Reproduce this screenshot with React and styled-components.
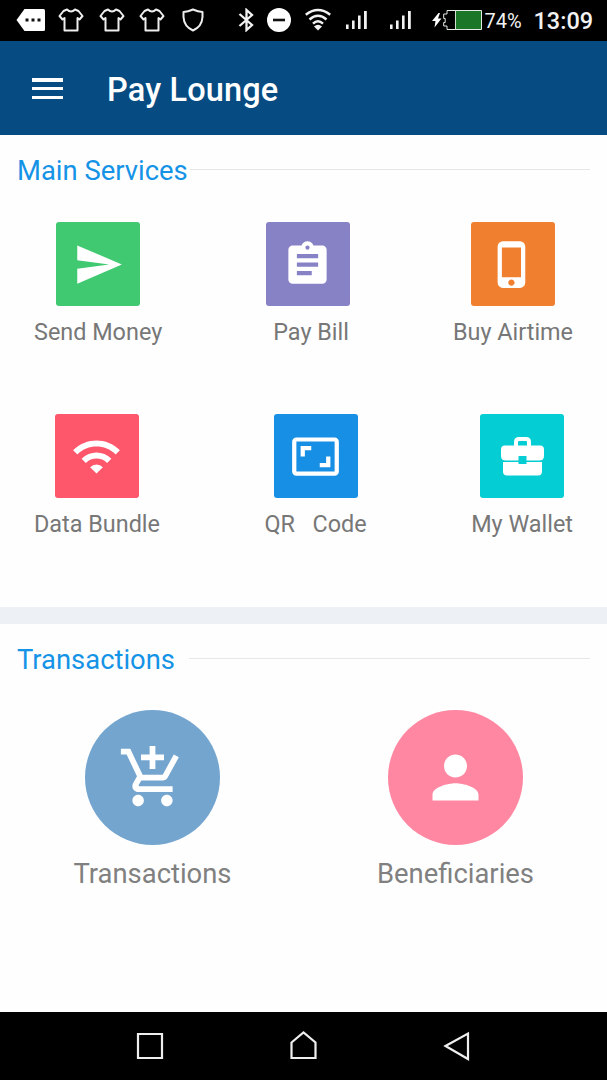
import React from 'react'
import styled, { createGlobalStyle } from 'styled-components'
import {
  MdAddShoppingCart,
  MdAspectRatio,
  MdAssignment,
  MdPerson,
  MdPhoneIphone,
  MdSend,
  MdWifi,
} from 'react-icons/md'

const GlobalStyle = createGlobalStyle`
  * {
    box-sizing: border-box;
  }
  body {
    margin: 0;
    background: #fff;
    font-family: Roboto, sans-serif;
  }
  svg {
    display: block;
    flex: none;
  }
`

const Screen = styled.div`
  display: flex;
  flex-direction: column;
  width: 607px;
  height: 1080px;
  overflow: hidden;
  background: #fefefe;
`

const StatusBar = styled.div`
  display: flex;
  align-items: center;
  height: 41px;
  padding: 0 14px 1px 16px;
  background: #000;
  color: #f2f2f2;
`

const StatusGroup = styled.div`
  display: flex;
  align-items: center;
  gap: ${props => props.gap || 0}px;
  margin-left: ${props => props.left || 0}px;
`

const BatteryText = styled.span`
  margin: 2px 0 0 3px;
  width: 49px;
  font-size: 20px;
  line-height: 24px;
`

const Clock = styled.span`
  margin-top: 2px;
  font-size: 23.5px;
  font-weight: 500;
  line-height: 28px;
  white-space: nowrap;
`

const Header = styled.header`
  display: flex;
  align-items: center;
  height: 94px;
  padding: 4px 32px 0;
  background: #074b83;
  color: #fff;
`

const Menu = styled.div`
  display: flex;
  flex-direction: column;
  justify-content: space-between;
  width: 31px;
  height: 21px;
  margin-top: -3px;
`

const MenuBar = styled.span`
  height: 3.5px;
  background: #fff;
`

const Title = styled.h1`
  margin: 0 0 0 44px;
  font-size: 32.5px;
  font-weight: 500;
  letter-spacing: 0.15px;
  line-height: 40px;
  white-space: nowrap;
`

const Section = styled.section`
  height: ${props => props.height}px;
  padding-top: 18px;
`

const SectionHead = styled.div`
  display: flex;
  align-items: center;
  height: 36px;
  padding: 0 17px;
`

const SectionTitle = styled.h2`
  margin: 0;
  width: ${props => props.width}px;
  color: #1593e6;
  font-size: 27.4px;
  font-weight: 400;
  line-height: 36px;
  white-space: nowrap;
`

const Rule = styled.span`
  flex: 1;
  height: 1px;
  margin-top: -3px;
  background: #e4e6e8;
`

const ServiceRow = styled.div`
  display: flex;
  justify-content: space-between;
  margin: ${props => props.top}px 34px 0;
`

const Service = styled.div`
  display: flex;
  flex-direction: column;
  align-items: center;
`

const Tile = styled.div`
  display: flex;
  align-items: center;
  justify-content: center;
  width: 84px;
  height: 84px;
  border-radius: 3px;
  background: ${props => props.color};
  color: #fff;
`

const Label = styled.span`
  margin-top: 11px;
  padding-left: ${props => props.indent || 0}px;
  color: #777;
  font-size: 23.4px;
  line-height: 30px;
  white-space: pre;
`

const Divider = styled.div`
  height: 17px;
  background: #edf1f5;
`

const CircleRow = styled.div`
  display: grid;
  grid-template-columns: 1fr 1fr;
  margin-top: 32px;
  padding-left: 1px;
`

const Circle = styled(Tile)`
  width: 135px;
  height: 135px;
  border-radius: 50%;
`

const CircleLabel = styled(Label)`
  margin-top: 12px;
  color: #808080;
  font-size: 27.4px;
  line-height: 34px;
`

const NavBar = styled.nav`
  display: flex;
  align-items: center;
  justify-content: space-between;
  height: 68px;
  margin-top: auto;
  padding: 0 136px 0 135px;
  background: #000;
`

const MessageIcon = () => (
  <svg width="30" height="24" viewBox="0 0 30 24">
    <path d="M8.500 1h19a1.500 1.500 0 0 1 1.500 1.500v19a1.500 1.500 0 0 1-1.500 1.500h-19L.5 12z" fill="#fff" />
    <path d="M9.500 10.500h3v3h-3zM15.500 10.500h3v3h-3zM21.500 10.500h3v3h-3z" fill="#111" />
  </svg>
)

const ShirtIcon = () => (
  <svg width="26" height="24" viewBox="0 0 26 24" fill="none" stroke="#eee" strokeWidth="2" strokeLinejoin="round">
    <path d="M9 1.500Q13 5.500 17 1.500L20.500 3L24.500 8L21.500 11.500L19.500 10V22.500H6.500V10L4.500 11.500L1.500 8L5.500 3Z" />
  </svg>
)

const ShieldIcon = () => (
  <svg width="22" height="24" viewBox="0 0 22 24" fill="none" stroke="#eee" strokeWidth="2" strokeLinejoin="round">
    <path d="M11 1.500Q6 3.800 1.500 4V9Q2 18.500 11 22.500Q20 18.500 20.500 9V4Q16 3.800 11 1.500Z" />
  </svg>
)

const BluetoothIcon = () => (
  <svg width="16" height="24" viewBox="0 0 16 24" fill="none" stroke="#f2f2f2" strokeWidth="2.300">
    <path d="M1.500 6L14 17L8.500 22V2L14 7L1.500 18" />
  </svg>
)

const DoNotDisturbIcon = () => (
  <svg width="24" height="24" viewBox="0 0 24 24">
    <circle cx="12" cy="12" r="12" fill="#fff" />
    <path d="M6 10.700h12v2.600H6z" fill="#111" />
  </svg>
)

const WifiStatusIcon = () => (
  <svg width="26" height="24" viewBox="0 0 26 24" fill="none" stroke="#f2f2f2" strokeWidth="2.500">
    <path d="M.8 6.800Q13-2.800 25.200 6.800M4.500 11.500Q13 4 21.500 11.500M8 15.600Q13 11 18 15.600" />
    <path d="M9 18.500Q13 15 17 18.500L13 22.500Z" fill="#f2f2f2" stroke="none" />
  </svg>
)

const SignalIcon = () => (
  <svg width="21" height="24" viewBox="0 0 21 24" fill="#f2f2f2">
    <path d="M0 16.500h2.600V21H0zM6 12.500h2.600V21H6zM12 7.500h2.600V21H12zM18 3h2.800v18H18z" />
  </svg>
)

const BatteryIcon = () => (
  <svg width="50" height="24" viewBox="0 0 50 24">
    <path d="M6.500 5L0 13h3.500L2.500 19.500L9.500 10.500H6L8 5z" fill="#fff" />
    <path d="M23.500 2.500H49.300V21.500H23.500z" fill="#1b7627" />
    <path d="M49.500 2.500H15V6H11.700v4.500h1.500v4h-1.500V18H15v3.500H49.500z" fill="none" stroke="#e4ebe4" strokeWidth="1" />
    <path d="M23.500 2.500v19" stroke="#cfe0cf" />
  </svg>
)

const BriefcaseIcon = () => (
  <svg width="44" height="40" viewBox="0 0 44 40">
    <path d="M16 10V6Q16 3 19 3H26Q29 3 29 6V10" fill="none" stroke="#fff" strokeWidth="4" />
    <path d="M5 9.500H40Q44 9.500 44 13.500V20Q44 24.500 39 24.500H26.500V20H18.500V24.500H6Q1 24.500 1 20V13.500Q1 9.500 5 9.500Z" fill="#fff" />
    <path d="M3 26H18.500V28H26.500V26H42V35.500Q42 39.500 38 39.500H7Q3 39.500 3 35.500Z" fill="#fff" />
  </svg>
)

const services = [
  [
    { label: 'Send Money', color: '#40c971', icon: <MdSend size={51} /> },
    { label: 'Pay Bill', color: '#8781c6', icon: <MdAssignment size={51} />, indent: 7 },
    { label: 'Buy Airtime', color: '#f08030', icon: <MdPhoneIphone size={51} /> },
  ],
  [
    { label: 'Data Bundle', color: '#fe566b', icon: <MdWifi size={51} /> },
    { label: 'QR   Code', color: '#178fe5', icon: <MdAspectRatio size={51} /> },
    { label: 'My Wallet', color: '#04cdd3', icon: <BriefcaseIcon /> },
  ],
]

const App = () => (
  <>
    <GlobalStyle />
    <Screen>
      <StatusBar>
        <MessageIcon />
        <StatusGroup gap={14.5} left={12}>
          <ShirtIcon />
          <ShirtIcon />
          <ShirtIcon />
        </StatusGroup>
        <StatusGroup left={16.5}>
          <ShieldIcon />
        </StatusGroup>
        <StatusGroup gap={13.5} left={34}>
          <BluetoothIcon />
          <DoNotDisturbIcon />
          <WifiStatusIcon />
        </StatusGroup>
        <StatusGroup gap={23} left={15}>
          <SignalIcon />
          <SignalIcon />
        </StatusGroup>
        <StatusGroup left={21}>
          <BatteryIcon />
          <BatteryText>74%</BatteryText>
          <Clock>13:09</Clock>
        </StatusGroup>
      </StatusBar>

      <Header>
        <Menu>
          <MenuBar />
          <MenuBar />
          <MenuBar />
        </Menu>
        <Title>Pay Lounge</Title>
      </Header>

      <Section height={472}>
        <SectionHead>
          <SectionTitle width={173}>Main Services</SectionTitle>
          <Rule />
        </SectionHead>
        {services.map((row, i) => (
          <ServiceRow key={i} top={i === 0 ? 33 : 67}>
            {row.map(({ label, color, icon, indent }) => (
              <Service key={label}>
                <Tile color={color}>{icon}</Tile>
                <Label indent={indent}>{label}</Label>
              </Service>
            ))}
          </ServiceRow>
        ))}
      </Section>

      <Divider />

      <Section height={388}>
        <SectionHead>
          <SectionTitle width={172}>Transactions</SectionTitle>
          <Rule />
        </SectionHead>
        <CircleRow>
          <Service>
            <Circle color="#74a5cf"><MdAddShoppingCart size={69} /></Circle>
            <CircleLabel>Transactions</CircleLabel>
          </Service>
          <Service>
            <Circle color="#ff87a2"><MdPerson size={69} /></Circle>
            <CircleLabel>Beneficiaries</CircleLabel>
          </Service>
        </CircleRow>
      </Section>

      <NavBar>
        <svg width="30" height="30" viewBox="0 0 30 30" fill="none" stroke="#eee" strokeWidth="2.200">
          <path d="M3 3H27V27H3Z" />
        </svg>
        <svg width="30" height="30" viewBox="0 0 30 30" fill="none" stroke="#eee" strokeWidth="2.200">
          <path d="M3.500 11.500L15.500 1.500L27.500 11.500V27H3.500Z" />
        </svg>
        <svg width="30" height="30" viewBox="0 0 30 30" fill="none" stroke="#eee" strokeWidth="2.200">
          <path d="M4.500 15L27 2.500V28Z" />
        </svg>
      </NavBar>
    </Screen>
  </>
)

export default App
